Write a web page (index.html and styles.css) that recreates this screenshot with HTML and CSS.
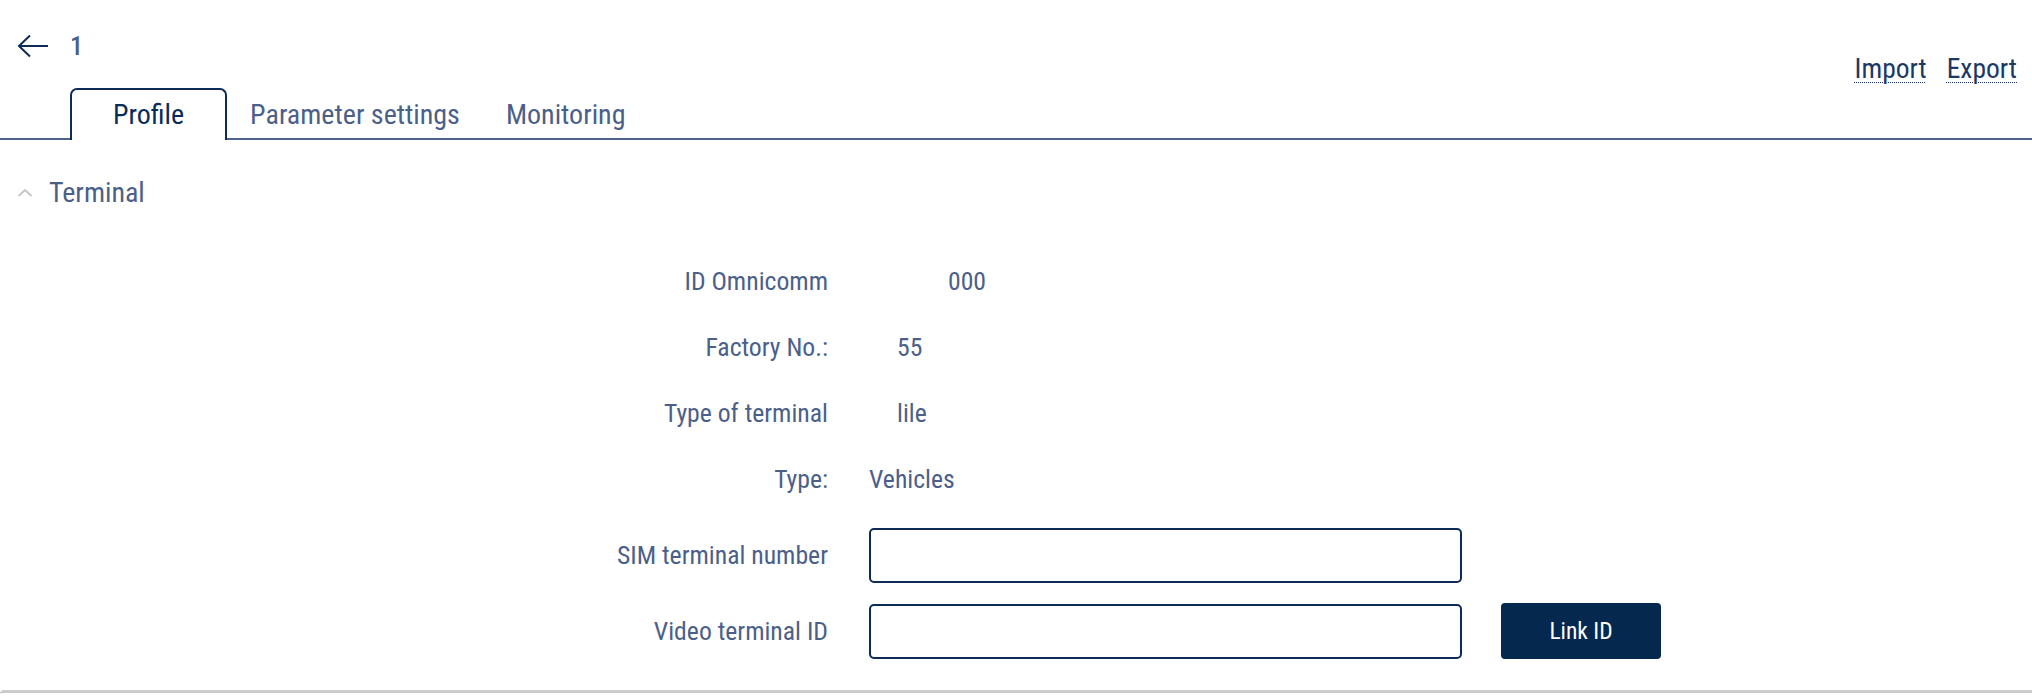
FILE: index.html
```html
<!DOCTYPE html>
<html lang="en">
  <head>
    <meta charset="UTF-8" />
    <meta name="viewport" content="width=device-width, initial-scale=1.0" />
    <title>Terminal 1</title>
    <link rel="stylesheet" href="styles.css">
  </head>
  <body>
    <div class="head">
      <div class="head-left">
        <div class="title">
          <!-- back arrow -->
          <svg class="back" width="32" height="24" viewBox="0 0 32 24">
            <path d="M31 12 H2 M13 1.5 L2 12 L13 22.5" fill="none" stroke="#0c2b57" stroke-width="2" />
          </svg>
          <span class="title-num">1</span>
        </div>
        <div class="tabs">
          <div class="tab tab-active">Profile</div>
          <div class="tab">Parameter settings</div>
          <div class="tab">Monitoring</div>
        </div>
      </div>
      <div class="links">
        <a class="link">Import</a>
        <a class="link">Export</a>
      </div>
    </div>

    <div class="section-head">
      <svg class="chevron" width="16" height="9" viewBox="0 0 16 9">
        <path d="M1.5 8 L8 2 L14.5 8" fill="none" stroke="#c6c6c6" stroke-width="2" />
      </svg>
      <span class="section-title">Terminal</span>
    </div>

    <div class="form">
      <div class="row">
        <div class="label">ID Omnicomm</div>
        <div class="value shift-lg">000</div>
      </div>
      <div class="row">
        <div class="label">Factory No.:</div>
        <div class="value shift-sm">55</div>
      </div>
      <div class="row">
        <div class="label">Type of terminal</div>
        <div class="value shift-sm">lile</div>
      </div>
      <div class="row">
        <div class="label">Type:</div>
        <div class="value">Vehicles</div>
      </div>
      <div class="row field first-field">
        <div class="label">SIM terminal number</div>
        <div class="value"><input class="input" type="text" /></div>
      </div>
      <div class="row field">
        <div class="label">Video terminal ID</div>
        <div class="value">
          <input class="input" type="text" />
          <button class="btn">Link ID</button>
        </div>
      </div>
    </div>

    <div class="panel-end"></div>
  </body>
</html>
```

FILE: styles.css
```css
body {
  margin: 0;
  font-family: "Roboto Condensed", "Roboto", "Liberation Sans", sans-serif;
  color: #4c5f88;
  background-color: #ffffff;
}
.head {
  display: flex;
  justify-content: space-between;
  border-bottom: 2px solid #4f6288;
}
.head-left {
  display: flex;
  flex-direction: column;
}
.title {
  display: flex;
  align-items: center;
  height: 60px;
  margin-top: 16px;
  padding-left: 17px;
}
.back {
  display: block;
}
.title-num {
  margin-left: 21px;
  font-size: 26px;
  font-weight: 500;
  color: #4c5f88;
}
.tabs {
  display: flex;
  margin-top: 12px;
  margin-left: 70px;
  margin-bottom: -2px;
}
.tab {
  height: 50px;
  line-height: 50px;
  padding: 0 21px;
  border: 2px solid transparent;
  border-bottom: none;
  font-size: 28px;
  color: #4c5f88;
  white-space: nowrap;
}
.tab-active {
  padding: 0 41px;
  border-color: #0c2b57;
  border-radius: 7px 7px 0 0;
  background-color: #ffffff;
  color: #0c2b57;
}
.links {
  display: flex;
  align-self: flex-start;
  gap: 20px;
  margin-top: 53px;
  padding-right: 15px;
  line-height: 32px;
}
.link {
  font-size: 27.5px;
  color: #1b3964;
  text-decoration: underline dotted 1px #1b3964;
  text-underline-offset: 4px;
  cursor: pointer;
}
.section-head {
  display: flex;
  align-items: center;
  height: 44px;
  margin-top: 30px;
  padding-left: 17px;
}
.chevron {
  display: block;
  margin-right: 16px;
}
.section-title {
  font-size: 28px;
  color: #4c5f88;
}
.form {
  margin-top: 34px;
}
.row {
  display: grid;
  grid-template-columns: 828px 1fr;
  column-gap: 41px;
  align-items: center;
  height: 66px;
  font-size: 25.7px;
}
.field {
  height: 76px;
}
.first-field {
  margin-top: 5px;
}
.label {
  text-align: right;
  white-space: nowrap;
}
.value {
  display: flex;
  align-items: center;
}
.shift-sm {
  padding-left: 28px;
}
.shift-lg {
  padding-left: 79px;
}
.input {
  box-sizing: border-box;
  width: 593px;
  height: 55px;
  margin: 0;
  border: 2px solid #0c2b57;
  border-radius: 5px;
  font-family: inherit;
  font-size: 25px;
  padding: 0 12px;
  outline: none;
}
.btn {
  box-sizing: border-box;
  width: 160px;
  height: 56px;
  margin-left: 39px;
  border: none;
  border-radius: 4px;
  background-color: #05284f;
  color: #ffffff;
  font-family: inherit;
  font-size: 23.5px;
}
.panel-end {
  margin-top: 21px;
  height: 6px;
  border-top: 3px solid #cbcbcb;
  border-top-left-radius: 4px;
}
```
